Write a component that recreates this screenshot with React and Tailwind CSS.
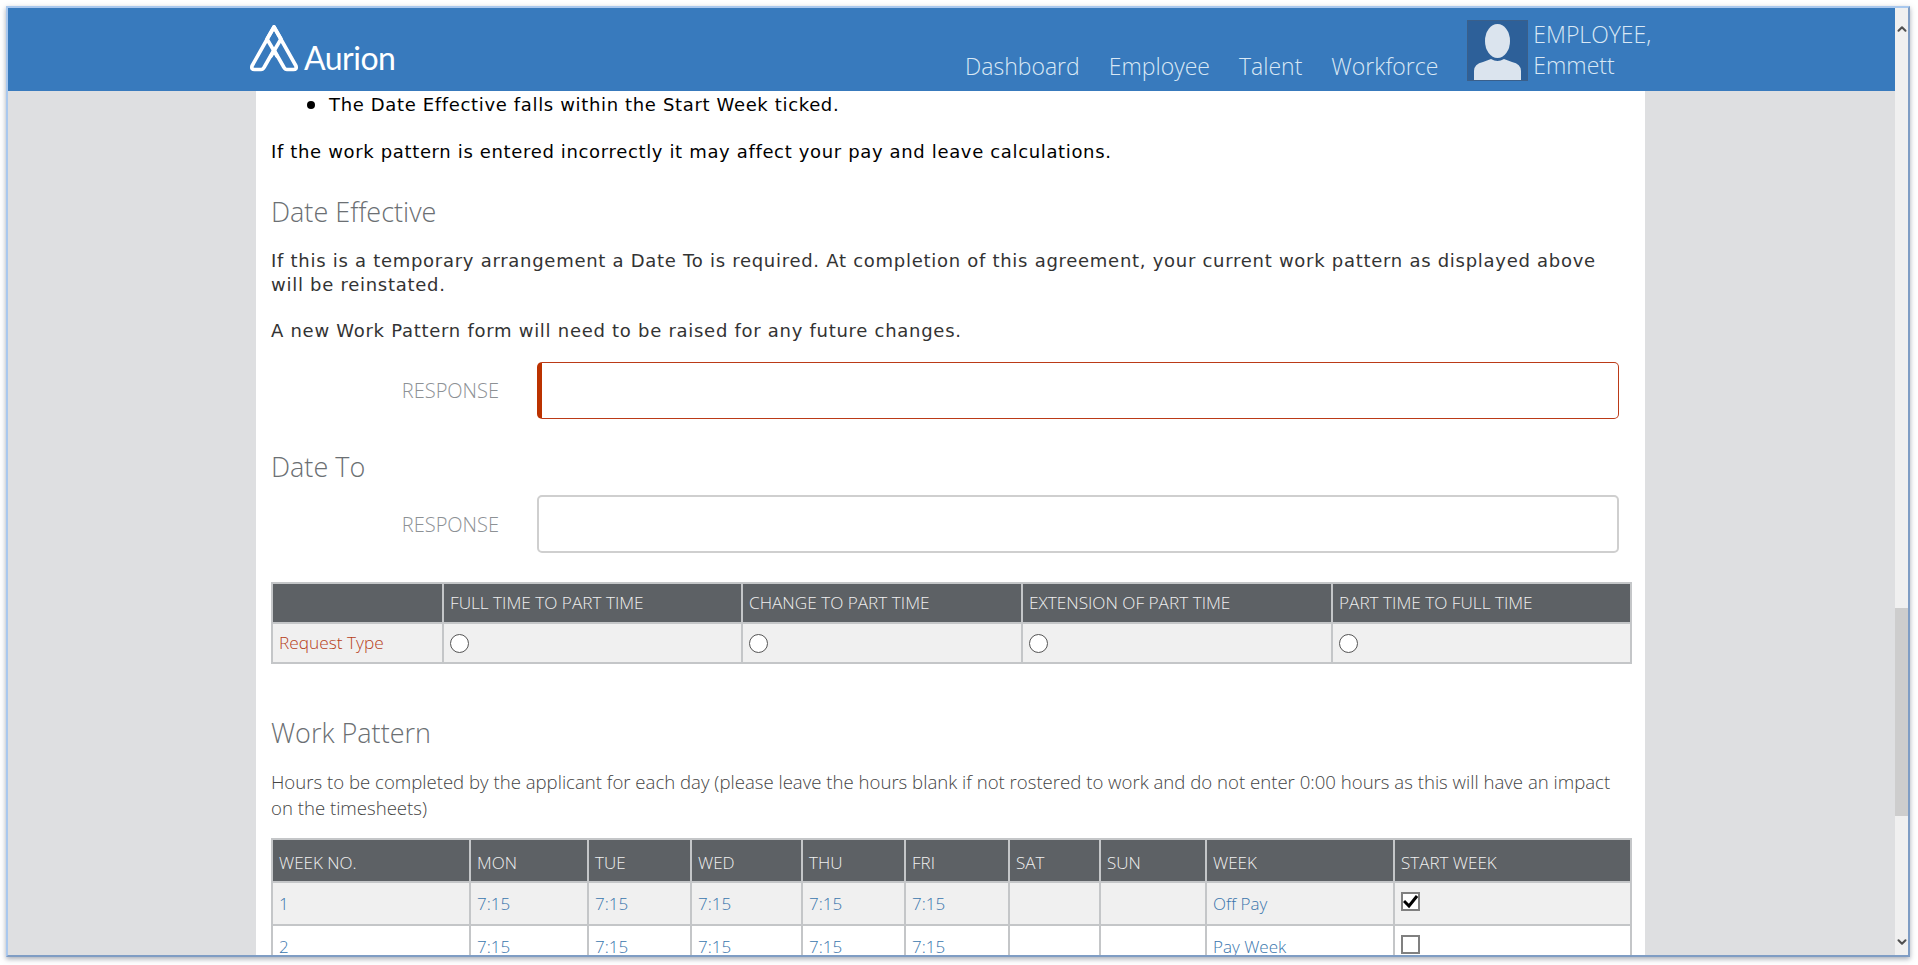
import { ChevronDown, ChevronUp } from 'lucide-react';

const requestTypes = [
  { label: 'FULL TIME TO PART TIME', width: 'w-[299px]' },
  { label: 'CHANGE TO PART TIME', width: 'w-[280px]' },
  { label: 'EXTENSION OF PART TIME', width: 'w-[310px]' },
  { label: 'PART TIME TO FULL TIME', width: 'w-[299px]' },
];

const patternColumns = [
  { label: 'WEEK NO.', width: 'w-[198px]' },
  { label: 'MON', width: 'w-[118px]' },
  { label: 'TUE', width: 'w-[103px]' },
  { label: 'WED', width: 'w-[111px]' },
  { label: 'THU', width: 'w-[103px]' },
  { label: 'FRI', width: 'w-[104px]' },
  { label: 'SAT', width: 'w-[91px]' },
  { label: 'SUN', width: 'w-[106px]' },
  { label: 'WEEK', width: 'w-[188px]' },
  { label: 'START WEEK', width: 'w-[237px]' },
];

const weeks = [
  { no: '1', label: 'Off Pay', checked: true, shaded: true },
  { no: '2', label: 'Pay Week', checked: false, shaded: false },
];

const days = ['mon', 'tue', 'wed', 'thu', 'fri'];

function Logo() {
  return (
    <div className="flex items-end gap-[5px] text-white">
      <svg width="50" height="48" viewBox="0 0 50 48" fill="none" stroke="currentColor" strokeWidth="3.6" strokeLinejoin="round" strokeLinecap="round">
        <path d="M25 3 L47 42 Q48 45.500 44.500 45.500 L38 45.500 Q36 45.500 35 43.500 L25 26 L15 43.500 Q14 45.500 12 45.500 L5.500 45.500 Q2 45.500 3 42 Z" />
        <path d="M25 3 L18 15 L28 32" />
        <path d="M25 3 L32 15 L22 32" />
      </svg>
      <span className="font-['Lato',sans-serif] font-normal text-[32px] leading-[34px] tracking-[-0.5px] -mb-[3px]">Aurion</span>
    </div>
  );
}

function Avatar() {
  return (
    <div className="w-[61px] h-[61px] bg-[#2d6099] border border-[#3a5f8a] overflow-hidden shrink-0">
      <svg width="59" height="59" viewBox="0 0 59 59" fill="#dbe4ee">
        <ellipse cx="29.500" cy="20" rx="12.500" ry="17" />
        <path d="M6 59 V50 Q6 43 15 41 L23 38 Q29.500 42 36 38 L44 41 Q53 43 53 50 V59 Z" />
      </svg>
    </div>
  );
}

function SectionTitle({ children, className = '' }) {
  return <h3 className={`font-['Open_Sans',sans-serif] font-light text-[27px] leading-[34px] text-[#6b6f73] ${className}`}>{children}</h3>;
}

function ResponseField({ invalid }) {
  return (
    <div className="flex items-center">
      <label className="w-[228px] mt-[1px] text-right font-['Open_Sans',sans-serif] font-light text-[20px] text-[#8d9195]">RESPONSE</label>
      <div className="w-[38px]" />
      <div
        className={
          invalid
            ? 'w-[1082px] h-[57px] bg-white rounded-[5px] border border-[#bb3a17] border-l-[5px] border-l-[#bb3200]'
            : 'w-[1082px] h-[58px] bg-white rounded-[5px] border-2 border-[#cfcfcf]'
        }
      />
    </div>
  );
}

function HeadCell({ children, className = '' }) {
  return (
    <th className={`border-2 border-[#c4c6c8] bg-[#5d6165] px-[6px] text-left font-['Open_Sans',sans-serif] font-light text-[#f0f0f0] ${className}`}>
      {children}
    </th>
  );
}

function Radio() {
  return <span className="block w-[19px] h-[19px] rounded-full border border-[#555] bg-white" />;
}

function Checkbox({ checked }) {
  return (
    <span className="flex items-center justify-center w-[19px] h-[19px] border-2 border-[#808080] bg-white">
      {checked && (
        <svg width="15" height="15" viewBox="0 0 15 15" fill="none" stroke="#000" strokeWidth="3">
          <path d="M1 7 L6 12 L14 2" />
        </svg>
      )}
    </span>
  );
}

function RequestTable() {
  return (
    <table className="table-fixed border-collapse w-[1359px] mt-[29px] font-['Open_Sans',sans-serif]">
      <thead>
        <tr className="h-[40px]">
          <HeadCell className="w-[171px] text-[17.200px]" />
          {requestTypes.map((t) => (
            <HeadCell key={t.label} className={`${t.width} text-[17.200px]`}>{t.label}</HeadCell>
          ))}
        </tr>
      </thead>
      <tbody>
        <tr className="h-[40px] bg-[#f0f0f0]">
          <td className="border-2 border-[#c4c6c8] px-[6px] font-light text-[17.300px] text-[#b7411b]">Request Type</td>
          {requestTypes.map((t) => (
            <td key={t.label} className="border-2 border-[#c4c6c8] px-[6px]"><Radio /></td>
          ))}
        </tr>
      </tbody>
    </table>
  );
}

function PatternTable() {
  const cell = 'border-2 border-[#c4c6c8] px-[6px] align-middle';
  return (
    <table className="table-fixed border-collapse w-[1359px] mt-[17px] font-['Open_Sans',sans-serif] font-light text-[17px] text-[#3a76ad]">
      <thead>
        <tr className="h-[43px]">
          {patternColumns.map((c) => (
            <HeadCell key={c.label} className={`${c.width} pt-[5px] text-[17px]`}>{c.label}</HeadCell>
          ))}
        </tr>
      </thead>
      <tbody>
        {weeks.map((w) => (
          <tr key={w.no} className={w.shaded ? 'h-[43px] bg-[#f0f0f0]' : 'h-[43px] bg-white'}>
            <td className={cell}>{w.no}</td>
            {days.map((d) => (
              <td key={d} className={cell}>7:15</td>
            ))}
            <td className={cell} />
            <td className={cell} />
            <td className={cell}>{w.label}</td>
            <td className={`${cell} pb-[5px]`}><Checkbox checked={w.checked} /></td>
          </tr>
        ))}
      </tbody>
    </table>
  );
}

function Scrollbar() {
  return (
    <div className="w-[13px] shrink-0 bg-[#f0f0f0] flex flex-col items-center text-[#505050]">
      <ChevronUp className="w-[14px] h-[14px] mt-[14px] shrink-0" strokeWidth={3.5} />
      <div className="h-[572px] shrink-0" />
      <div className="w-full h-[208px] bg-[#cdcdcd] shrink-0" />
      <div className="flex-1" />
      <ChevronDown className="w-[14px] h-[14px] mb-[6px] shrink-0" strokeWidth={3.5} />
    </div>
  );
}

export default function App() {
  return (
    <div className="w-[1918px] h-[965px] bg-white pt-[6px] pl-[6px]">
      <div className="flex w-[1904px] h-[951px] border-r-2 border-b-2 border-[#7f9dc4] border-l-2 border-l-[#a9c8ee] border-t-2 border-t-[#a9c8ee] shadow-[0_2px_5px_rgba(80,90,110,0.5)] overflow-hidden">
        <div className="flex flex-col flex-1 min-w-0 bg-[#dedfe1]">
          <header className="h-[83px] shrink-0 bg-[#387abd] flex items-start font-['Open_Sans',sans-serif] font-light text-[#d9e8f5]">
            <div className="ml-[241px] w-[716px] mt-[16px]"><Logo /></div>
            <nav className="mt-[43px] flex gap-[29px] text-[23px] leading-[30px]">
              <span>Dashboard</span>
              <span>Employee</span>
              <span>Talent</span>
              <span>Workforce</span>
            </nav>
            <div className="ml-[29px] mt-[12px] flex gap-[5px]">
              <Avatar />
              <div className="text-[23px] leading-[31px] -mt-[1px]">
                <div>EMPLOYEE,</div>
                <div>Emmett</div>
              </div>
            </div>
          </header>
          <div className="flex-1 min-h-0 overflow-hidden ml-[248px] w-[1389px] bg-white px-[15px]">
            <ul className="mt-[2px] ml-[36px] font-['DejaVu_Sans',sans-serif] text-[18px] tracking-[0.65px] leading-[24px] text-black">
              <li className="flex items-center gap-[14px]">
                <span className="w-[8px] h-[8px] rounded-full bg-black shrink-0" />
                The Date Effective falls within the Start Week ticked.
              </li>
            </ul>
            <p className="mt-[23px] font-['DejaVu_Sans',sans-serif] text-[18px] tracking-[0.65px] leading-[24px] text-black">
              If the work pattern is entered incorrectly it may affect your pay and leave calculations.
            </p>
            <SectionTitle className="mt-[31px]">Date Effective</SectionTitle>
            <div className="font-['DejaVu_Sans',sans-serif] text-[18px] tracking-[0.72px] leading-[24px] text-[#333]">
              <p className="mt-[20px]">If this is a temporary arrangement a Date To is required. At completion of this agreement, your current work pattern as displayed above will be reinstated.</p>
              <p className="mt-[22px]">A new Work Pattern form will need to be raised for any future changes.</p>
            </div>
            <div className="mt-[19px]"><ResponseField invalid /></div>
            <SectionTitle className="mt-[31px]">Date To</SectionTitle>
            <div className="mt-[11px]"><ResponseField /></div>
            <RequestTable />
            <SectionTitle className="mt-[52px]">Work Pattern</SectionTitle>
            <p className="mt-[19px] font-['Open_Sans',sans-serif] font-light text-[18.600px] leading-[26px] text-[#444]">
              Hours to be completed by the applicant for each day (please leave the hours blank if not rostered to work and do not enter 0:00 hours as this will have an impact on the timesheets)
            </p>
            <PatternTable />
          </div>
        </div>
        <Scrollbar />
      </div>
    </div>
  );
}
